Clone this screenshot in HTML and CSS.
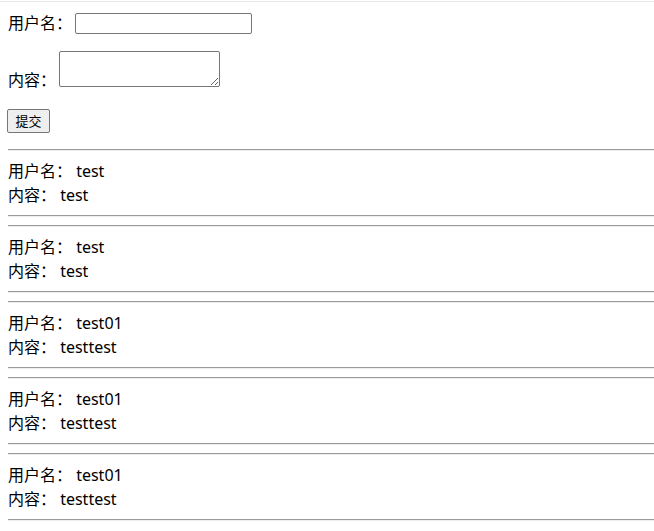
FILE: index.html
```html
<!DOCTYPE html>
<html lang="zh-CN">
<head>
<meta charset="utf-8">
<title>留言</title>
<link rel="stylesheet" href="styles.css">
</head>
<body>
<div class="topline"></div>
<div class="page">
  <form class="form">
    <div class="row row-name">
      <label class="label" for="username">用户名：</label>
      <input class="field" id="username" type="text">
    </div>
    <div class="row row-content">
      <label class="label label-content" for="content">内容：</label>
      <textarea class="area" id="content"></textarea>
    </div>
    <div class="row row-submit">
      <button class="submit" type="button">提交</button>
    </div>
  </form>
  <div class="list">
    <div class="item"><hr class="rule"><div class="text">用户名： test</div><div class="text">内容： test</div><hr class="rule"></div>
    <div class="item"><hr class="rule"><div class="text">用户名： test</div><div class="text">内容： test</div><hr class="rule"></div>
    <div class="item"><hr class="rule"><div class="text">用户名： test01</div><div class="text">内容： testtest</div><hr class="rule"></div>
    <div class="item"><hr class="rule"><div class="text">用户名： test01</div><div class="text">内容： testtest</div><hr class="rule"></div>
    <div class="item"><hr class="rule"><div class="text">用户名： test01</div><div class="text">内容： testtest</div><hr class="rule"></div>
  </div>
</div>
</body>
</html>
```
FILE: styles.css
```css
html, body {
  margin: 0;
  padding: 0;
  background: #ffffff;
}
body {
  font-family: "Noto Sans", "Noto Sans CJK SC", sans-serif;
  font-size: 16px;
  line-height: 24px;
  color: #000000;
}
.topline {
  height: 1px;
  margin-top: 1px;
  background: #e6e6e6;
}
.page {
  padding-left: 8px;
}
.form {
  margin: 0;
  padding-bottom: 8px;
}
.row {
  display: flex;
}
.row-name {
  margin-top: 11px;
  height: 21px;
  align-items: center;
  gap: 3px;
}
.row-name .label {
  line-height: 21px;
}
.row-content {
  margin-top: 17px;
  align-items: flex-end;
  gap: 3px;
}
.label-content {
  margin-bottom: -5px;
}
.label {
  white-space: nowrap;
}
.field {
  box-sizing: border-box;
  width: 177px;
  height: 21px;
  margin: 0;
  padding: 1px 2px;
  border: 1px solid #767676;
  border-radius: 2px;
  font-size: 13px;
}
.area {
  box-sizing: border-box;
  width: 161px;
  height: 36px;
  margin: 0;
  padding: 2px;
  border: 1px solid #767676;
  border-radius: 2px;
  font-size: 13px;
  resize: both;
}
.row-submit {
  margin-top: 22px;
  margin-left: -1px;
}
.submit {
  box-sizing: border-box;
  width: 43px;
  height: 24px;
  margin: 0;
  padding: 0;
  border: 1px solid #767676;
  border-radius: 2px;
  background: #efefef;
  font-family: "Noto Sans CJK SC", sans-serif;
  font-size: 13px;
  line-height: 20px;
  color: #000;
}
.rule {
  margin: 8px 0;
  height: 0;
  border: 0;
  border-top: 1px solid #9a9a9a;
  border-bottom: 1px solid #eeeeee;
}
.text {
  white-space: pre;
}
```
